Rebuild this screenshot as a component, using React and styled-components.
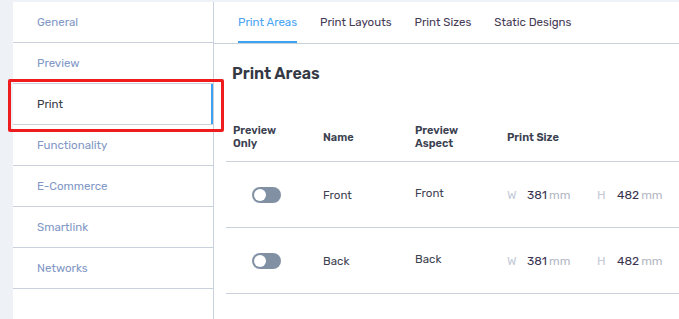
import React from 'react'
import styled, { createGlobalStyle } from 'styled-components'

const GlobalStyle = createGlobalStyle`
  body {
    margin: 0;
    background: #eef1f5;
    font-family: Rubik, Inter, "Noto Sans", sans-serif;
  }
`

const sections = ['General', 'Preview', 'Print', 'Functionality', 'E-Commerce', 'Smartlink', 'Networks']
const tabs = ['Print Areas', 'Print Layouts', 'Print Sizes', 'Static Designs']
const areas = [
  { name: 'Front', aspect: 'Front', w: 381, h: 482 },
  { name: 'Back', aspect: 'Back', w: 381, h: 482 },
]

function App() {
  return (
    <>
      <GlobalStyle />
      <SPage>
        <SSidebar>
          {sections.map((s) => (
            <SNavItem key={s} active={s === 'Print'}>{s}</SNavItem>
          ))}
          <SHighlight />
        </SSidebar>
        <SMain>
          <STabBar>
            {tabs.map((t, i) => (
              <STab key={t} active={i === 0}>{t}</STab>
            ))}
          </STabBar>
          <SContent>
            <SHeading>Print Areas</SHeading>
            <STable>
              <SHeadRow>
                <SHeadCell>Preview<br />Only</SHeadCell>
                <SHeadCell>Name</SHeadCell>
                <SHeadCell>Preview<br />Aspect</SHeadCell>
                <SHeadCell>Print Size</SHeadCell>
              </SHeadRow>
              {areas.map((a) => (
                <SRow key={a.name}>
                  <SToggleCell>
                    <SToggle><SKnob /></SToggle>
                  </SToggleCell>
                  <SCell>{a.name}</SCell>
                  <SCell raised>{a.aspect}</SCell>
                  <SSizeCell>
                    <SDim>
                      <SDimLabel>W</SDimLabel>
                      <SDimValue>{a.w}</SDimValue>
                      <SUnit>mm</SUnit>
                    </SDim>
                    <SDim>
                      <SDimLabel>H</SDimLabel>
                      <SDimValue>{a.h}</SDimValue>
                      <SUnit>mm</SUnit>
                    </SDim>
                  </SSizeCell>
                </SRow>
              ))}
            </STable>
          </SContent>
        </SMain>
      </SPage>
    </>
  )
}

export default App

const SPage = styled.div`
  display: flex;
  height: 317px;
  padding: 2px 0 0 13px;
  overflow: hidden;
`

const SSidebar = styled.div`
  position: relative;
  width: 200px;
  flex-shrink: 0;
  background: #fff;
  border-right: 1px solid #c9d1dc;
  display: flex;
  flex-direction: column;
`

const SNavItem = styled.div`
  height: 40px;
  display: flex;
  align-items: center;
  padding: 0 0 1px 24px;
  box-sizing: border-box;
  font-size: 11.5px;
  color: ${(p) => (p.active ? '#353a45' : '#8298c6')};
  border-bottom: 1px solid #c9d1dc;
  box-shadow: ${(p) => (p.active ? 'inset -2px 0 0 #3ea2f0' : 'none')};
  height: 41px;
`

const SHighlight = styled.div`
  position: absolute;
  left: -5px;
  top: 77px;
  width: 210px;
  height: 47px;
  border: 3px solid #ee1c1c;
  border-radius: 2px;
`

const SMain = styled.div`
  flex: 1;
  background: #fff;
  display: flex;
  flex-direction: column;
`

const STabBar = styled.div`
  display: flex;
  gap: 23px;
  height: 41px;
  padding-left: 24px;
  border-bottom: 1px solid #c9d1dc;
`

const STab = styled.div`
  display: flex;
  align-items: center;
  padding-bottom: 1px;
  font-size: 11.5px;
  color: ${(p) => (p.active ? '#4aa3f2' : '#453a55')};
  box-shadow: ${(p) => (p.active ? 'inset 0 -2px 0 #3ea2f0' : 'none')};
`

const SContent = styled.div`
  padding: 0 0 0 12px;
`

const SHeading = styled.div`
  padding: 20px 0 0 6px;
  height: 20px;
  line-height: 20px;
  font-size: 16px;
  font-weight: 600;
  color: #343944;
`

const STable = styled.div`
  margin-top: 29px;
`

const SHeadRow = styled.div`
  display: grid;
  grid-template-columns: 90px 92px 92px 1fr;
  align-items: center;
  height: 48px;
  border-bottom: 1px solid #c9d1dc;
`

const SHeadCell = styled.div`
  padding-left: 7px;
  font-size: 11px;
  font-weight: 600;
  line-height: 13px;
  color: #3b4150;
`

const SRow = styled.div`
  display: grid;
  grid-template-columns: 90px 92px 92px 1fr;
  align-items: center;
  height: 65px;
  border-bottom: 1px solid #c9d1dc;
`

const SCell = styled.div`
  padding-left: 7px;
  padding-bottom: ${(p) => (p.raised ? '3px' : '0')};
  font-size: 11.5px;
  color: #3d4250;
`

const SToggleCell = styled.div`
  padding-left: 26px;
  display: flex;
  align-items: center;
`

const SToggle = styled.div`
  width: 29px;
  height: 16px;
  border-radius: 8px;
  background: #8290a4;
  display: flex;
  align-items: center;
  padding-left: 2px;
  box-sizing: border-box;
`

const SKnob = styled.div`
  width: 12px;
  height: 12px;
  border-radius: 50%;
  background: #fff;
`

const SSizeCell = styled.div`
  padding-left: 7px;
  display: flex;
`

const SDim = styled.div`
  width: 90px;
  display: flex;
  align-items: baseline;
  font-size: 12px;
`

const SDimLabel = styled.span`
  width: 20px;
  color: #c3cad8;
`

const SDimValue = styled.span`
  color: #3a3450;
  margin-right: 2px;
`

const SUnit = styled.span`
  color: #b3b7c4;
`
